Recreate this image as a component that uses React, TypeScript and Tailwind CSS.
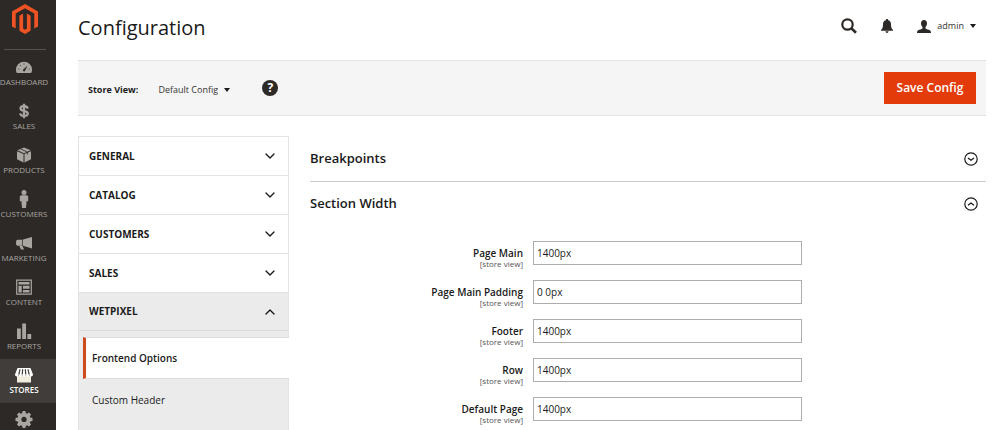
import React from 'react';
import { ChevronDown, ChevronUp } from 'lucide-react';

type MenuItem = { label: string; icon: React.ReactNode; active?: boolean };

const MENU: MenuItem[] = [
  {
    label: 'DASHBOARD',
    icon: (
      <>
        <path d="M.8 14C.3 12.900 0 11.900 0 10.700a8 8 0 0 1 16 0c0 1.200-.3 2.200-.8 3.300z" />
        <g fill="#2d2926">
          <path d="M7 10.800l4.600-4.200-2.600 5.400a1.200 1.200 0 0 1-2-1.200z" />
          <circle cx="2.800" cy="10" r=".5" />
          <circle cx="4.400" cy="6.600" r=".5" />
          <circle cx="8" cy="4.900" r=".5" />
          <circle cx="13.200" cy="10" r=".5" />
        </g>
      </>
    ),
  },
  {
    label: 'SALES',
    icon: (
      <path
        d="M11.700 5.600C11.500 4 10.100 3.100 8 3.100S4.500 3.900 4.500 5.400c0 3.300 7.300 1.700 7.300 5.200 0 1.500-1.500 2.400-3.700 2.400S4.400 12 4.200 10.400M8 .8v14.400"
        fill="none"
        stroke="currentColor"
        strokeWidth="2.200"
      />
    ),
  },
  {
    label: 'PRODUCTS',
    icon: (
      <>
        <path d="M8 .6l6.600 2.700L8 6.300 1.400 3.300z" />
        <path d="M1 4.200l6.500 2.900v8.300L1 12.200z" />
        <path d="M15 4.200L8.500 7.100v8.300l6.500-3.200z" />
        <path d="M4.600 2l6.800 3v2.500" fill="none" stroke="#2d2926" strokeWidth=".8" />
      </>
    ),
  },
  {
    label: 'CUSTOMERS',
    icon: (
      <>
        <circle cx="8" cy="1.500" r="2.500" />
        <path d="M5.500 4.200h5c1 0 1.700.8 1.700 1.800v4.200h-1.700V12l-.6 5H6.100L5.500 12v-1.800H3.800V6c0-1 .7-1.800 1.700-1.800z" />
      </>
    ),
  },
  {
    label: 'MARKETING',
    icon: (
      <>
        <path d="M16 2v11.500L7 10.800V4.600z" />
        <path d="M6.300 4.700v6H1.700C.5 10.700 0 9.600 0 7.700s.5-3 1.700-3z" />
        <path d="M3.300 11h3.200l1.600 3.500H5z" />
      </>
    ),
  },
  {
    label: 'CONTENT',
    icon: (
      <>
        <path d="M.7 1.200h14.600v14H.7z" fill="none" stroke="currentColor" strokeWidth="1.200" />
        <path d="M2.500 3h11v2.500h-11zM2.500 6.700h3.200v6.800H2.500zM6.900 6.700h6.600v3.100H6.900zM6.900 11h6.600v2.500H6.900z" />
      </>
    ),
  },
  {
    label: 'REPORTS',
    icon: <path d="M1 5.500h3.800V16H1zM6.200.5H10V16H6.200zM11.400 11h3.800v5h-3.800z" />,
  },
  {
    label: 'STORES',
    active: true,
    icon: (
      <>
        <path d="M1 9h14v6.500H1z" fill="#f2ecdf" />
        <path d="M1.500 1h13L17 7.500c0 1.300-.8 2-1.800 2s-1.800-.7-1.800-1.500c0 .8-.8 1.500-1.800 1.500S9.800 8.800 9.800 8c0 .8-.8 1.500-1.800 1.500S6.200 8.800 6.200 8c0 .8-.8 1.500-1.800 1.500S2.600 8.800 2.600 8c0 .8-.8 1.500-1.800 1.500s-1.800-.7-1.800-2z" />
        <path d="M4 2.300L2.800 7.500M6.700 2.300l-.5 5.200M9.300 2.300l.5 5.200M12 2.300l1.200 5.200" fill="none" stroke="#413d3a" strokeWidth="1.200" />
      </>
    ),
  },
  {
    label: 'SYSTEM',
    icon: (
      <path
        fillRule="evenodd"
        d="M6.600 0h2.800l.5 2.200 1.200.5L13 1.500l2 2-1.200 1.900.5 1.200 2.200.5v2.800l-2.200.5-.5 1.200 1.200 1.900-2 2-1.900-1.200-1.200.5-.5 2.200H6.600l-.5-2.200-1.200-.5L3 15.500l-2-2 1.200-1.900-.5-1.200L-.5 9.900V7.100l2.200-.5.500-1.200L1 3.500l2-2 1.900 1.200 1.200-.5zM8 5.800a2.600 2.600 0 1 0 0 5.200 2.600 2.600 0 0 0 0-5.200z"
      />
    ),
  },
];

const TABS = ['GENERAL', 'CATALOG', 'CUSTOMERS', 'SALES'];

const FIELDS = [
  { id: 'page-main', label: 'Page Main', value: '1400px' },
  { id: 'page-main-padding', label: 'Page Main Padding', value: '0 0px' },
  { id: 'footer', label: 'Footer', value: '1400px' },
  { id: 'row', label: 'Row', value: '1400px' },
  { id: 'default-page', label: 'Default Page', value: '1400px' },
];

const Caret: React.FC = () => (
  <svg viewBox="0 0 6 4" className="h-1 w-1.5" fill="#1a1a1a">
    <path d="M0 0h6L3 4z" />
  </svg>
);

const Sidebar: React.FC = () => (
  <aside className="w-14 shrink-0 bg-[#2d2926] text-[#a9a5a1]">
    <div className="mr-2.5 mb-px ml-1 flex h-[50px] justify-center border-b border-[#56514d] pt-1">
      <svg viewBox="0 0 26 30" className="h-[30px] w-[26px]" fill="#ef5323">
        <path d="M13 0l13 7.500v15l-3.700 2.100v-15L13 4.300 3.700 9.600v15L0 22.500v-15z" />
        <path d="M7.400 11.700l3.700-2.100v15L13 25.700l1.900-1.100v-15l3.700 2.100v15.100L13 30l-5.600-3.200z" />
      </svg>
    </div>
    <nav>
      {MENU.map((item) => (
        <a
          key={item.label}
          href="#"
          className={
            item.active
              ? 'flex h-11 flex-col items-center gap-px bg-[#413d3a] pt-2 pr-2 text-white'
              : 'flex h-11 flex-col items-center gap-px pt-2 pr-2'
          }
        >
          <svg viewBox="0 0 16 16" className="size-4 overflow-visible" fill="currentColor">
            {item.icon}
          </svg>
          <span className={item.active ? 'text-[8px] leading-3 font-semibold' : 'text-[8px] leading-3'}>
            {item.label}
          </span>
        </a>
      ))}
    </nav>
  </aside>
);

const Header: React.FC = () => (
  <header className="flex h-[60px] items-center justify-between pr-2.5 pb-1">
    <h1 className="text-xl leading-7 text-[#1a1a1a]">Configuration</h1>
    <div className="flex h-[52px] items-center self-start">
      <button aria-label="Search" className="mr-6">
        <svg viewBox="0 0 16 16" className="size-4" fill="none" stroke="#2d2926" strokeWidth="2.200">
          <circle cx="6.500" cy="6.500" r="5.200" />
          <path d="M10.300 10.300l4.700 4.500" strokeWidth="2.600" />
        </svg>
      </button>
      <button aria-label="Notifications" className="mr-6">
        <svg viewBox="0 0 12 14" className="h-3.5 w-3" fill="#2d2926">
          <path d="M6 0c.8 0 1.200.5 1.200 1.200C9.300 1.700 10 3.500 10 5.500c0 3 .7 4.200 2 5.500v.8H0V11c1.300-1.300 2-2.500 2-5.500 0-2 .7-3.800 2.800-4.300C4.800.5 5.200 0 6 0zM4.500 12.300h3C7.500 13.300 6.800 14 6 14s-1.500-.7-1.500-1.700z" />
        </svg>
      </button>
      <button className="flex items-center gap-1.5 text-[9px] leading-4 text-[#333]">
        <svg viewBox="0 0 14 13" className="h-[13px] w-3.5" fill="#2d2926">
          <path d="M7 0c2 0 3 1.300 3 3.200 0 1.700-.6 3-1.500 3.800v1.200c0 .8 1.500.9 3.300 1.600 1.500.6 2.200 1.300 2.200 3.200H0c0-1.900.7-2.600 2.200-3.200 1.800-.7 3.300-.8 3.300-1.600V7C4.600 6.200 4 4.900 4 3.200 4 1.300 5 0 7 0z" />
        </svg>
        admin
        <Caret />
      </button>
    </div>
  </header>
);

const Toolbar: React.FC = () => (
  <div className="flex h-14 items-center border-y border-[#e3e3e3] bg-[#f5f5f5] px-2.5">
    <label htmlFor="store-view" className="mt-1 text-[9px] leading-4 font-bold text-[#1a1a1a]">
      Store View:
    </label>
    <div className="relative mt-1 ml-5 flex items-center">
      <select id="store-view" className="appearance-none pr-3 text-[9px] leading-4 text-[#333]">
        <option>Default Config</option>
      </select>
      <span className="pointer-events-none absolute right-0">
        <Caret />
      </span>
    </div>
    <button
      aria-label="Help"
      className="ml-8 flex size-4 items-center justify-center rounded-full bg-[#2d2926] text-xs leading-4 font-bold text-white"
    >
      ?
    </button>
    <button className="ml-auto h-8 w-23 bg-[#e43b0a] text-xs font-semibold text-white">Save Config</button>
  </div>
);

const ConfigTabs: React.FC = () => (
  <div className="w-[211px] shrink-0 border border-b-0 border-[#e3e3e3] text-[10px] text-[#1a1a1a]">
    {TABS.map((tab) => (
      <button
        key={tab}
        className="flex h-[39px] w-full items-center justify-between border-b border-[#e3e3e3] px-2.5 font-bold"
      >
        {tab}
        <ChevronDown className="size-4" />
      </button>
    ))}
    <div className="h-full bg-[#ebebeb]">
      <button className="flex h-[38px] w-full items-center justify-between border-b border-[#dcdcdc] px-2.5 font-bold">
        WETPIXEL
        <ChevronUp className="size-4" />
      </button>
      <div className="-mr-px pt-1.5 pl-1">
        <a
          href="#"
          className="flex h-[42px] items-center border-y border-l-3 border-y-[#dcdcdc] border-l-[#cf4a1f] bg-white pl-1.5 font-semibold"
        >
          Frontend Options
        </a>
        <a href="#" className="flex h-[42px] items-center pl-[9px]">
          Custom Header
        </a>
      </div>
    </div>
  </div>
);

const SectionHeading: React.FC<{ title: string; open?: boolean }> = ({ title, open }) => (
  <button
    className={
      open
        ? 'flex h-11 w-full items-center justify-between pr-2 text-[13px] font-semibold'
        : 'flex h-[46px] w-full items-center justify-between border-b border-[#ccc] pr-2 text-[13px] font-semibold'
    }
  >
    {title}
    <svg viewBox="0 0 14 14" className="size-3.5" fill="none" stroke="#1a1a1a" strokeWidth="1.200">
      <circle cx="7" cy="7" r="6.200" />
      <path d={open ? 'M4 8.200L7 6l3 2.200' : 'M4 6l3 2.200L10 6'} strokeWidth="1.400" />
    </svg>
  </button>
);

const App: React.FC = () => {
  return (
    <div className="flex h-screen overflow-hidden bg-white font-['Open_Sans',sans-serif]">
      <Sidebar />
      <main className="min-w-0 flex-1 pr-3.5 pl-[22px]">
        <Header />
        <Toolbar />
        <div className="mt-5 flex h-full gap-[21px]">
          <ConfigTabs />
          <section className="min-w-0 flex-1 text-[#1a1a1a]">
            <SectionHeading title="Breakpoints" />
            <SectionHeading title="Section Width" open />
            <div className="mt-[15px] flex flex-col gap-[15px]">
              {FIELDS.map((field) => (
                <div key={field.id} className="grid h-6 grid-cols-[213px_269px] gap-2.5">
                  <label htmlFor={field.id} className="pt-[5px] text-right text-[10px] leading-3.5 font-semibold">
                    {field.label}
                    <span className="block text-[8px] leading-2 font-normal text-[#555]">[store view]</span>
                  </label>
                  <input
                    id={field.id}
                    type="text"
                    defaultValue={field.value}
                    className="h-6 border border-[#adadad] px-[3px] text-[10px]"
                  />
                </div>
              ))}
            </div>
          </section>
        </div>
      </main>
    </div>
  );
};

export default App;
